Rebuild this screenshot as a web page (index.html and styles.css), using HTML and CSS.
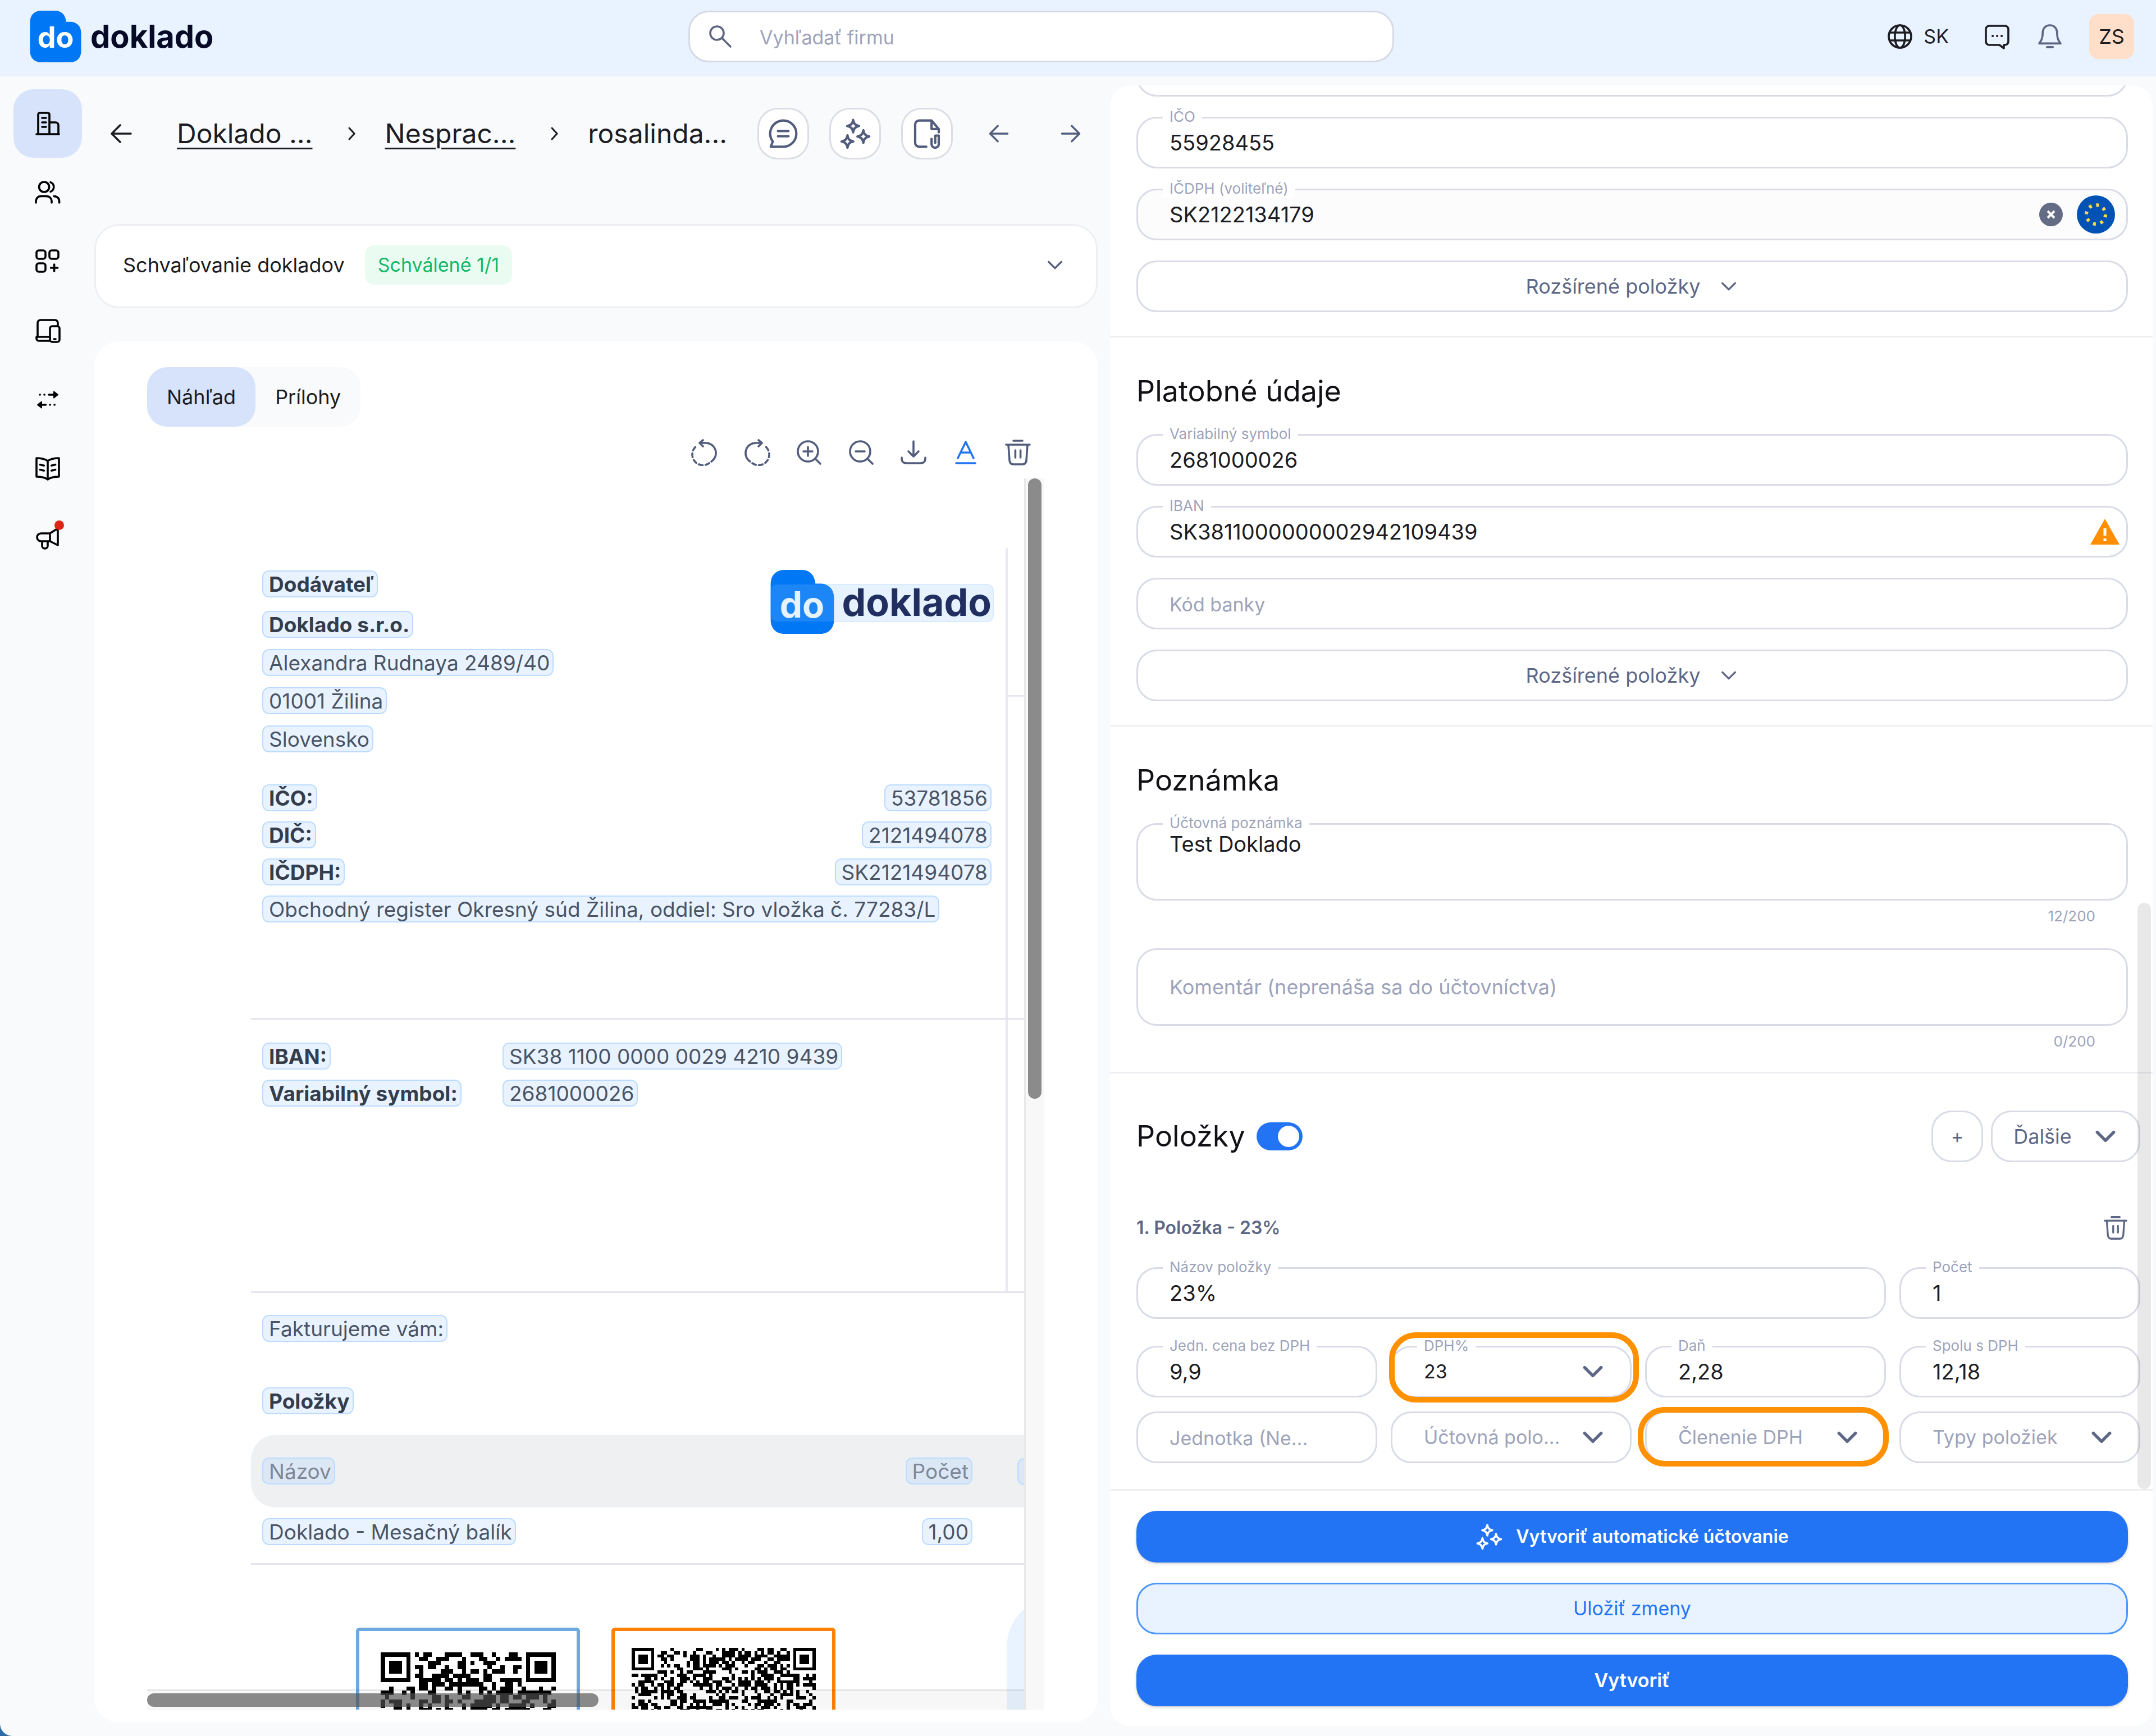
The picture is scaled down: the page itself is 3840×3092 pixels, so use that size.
FILE: index.html
```html
<!DOCTYPE html>
<html lang="sk">
<head>
<meta charset="UTF-8">
<meta name="viewport" content="width=device-width, initial-scale=1.0">
<title>Doklado</title>
<link rel="stylesheet" href="styles.css">
</head>
<body>

<!-- icons -->
<svg class="sprite" aria-hidden="true">
  <symbol id="logo" viewBox="0 0 92 93">
    <path d="M0 20C0 8 8 0 20 0H45C57 0 64 8 65 20H72C84 20 92 28 92 40V73C92 85 84 93 72 93H20C8 93 0 85 0 73Z" fill="#0078f5"/>
  </symbol>
  <symbol id="search" viewBox="0 0 24 24"><circle cx="9" cy="9" r="6"/><path d="M13.500 13.500l7.500 7.500"/></symbol>
  <symbol id="globe" viewBox="0 0 24 24"><circle cx="12" cy="12" r="10"/><ellipse cx="12" cy="12" rx="4.600" ry="10"/><path d="M3 8.500h18M3 15.500h18"/></symbol>
  <symbol id="chat" viewBox="0 0 24 24"><path d="M5 2.500h14a3 3 0 0 1 3 3v11a3 3 0 0 1-3 3h-1v3l-4-3H5a3 3 0 0 1-3-3v-11a3 3 0 0 1 3-3z"/><path d="M8 11.500h.1M12 11.500h.1M16 11.500h.1" stroke-width="2"/></symbol>
  <symbol id="bell" viewBox="0 0 24 24"><path d="M12 2c-4 0-6.400 3-6.400 7 0 5-1.500 7-3.100 9.200h19C19.900 16 18.400 14 18.400 9c0-4-2.400-7-6.400-7z"/><path d="M9.500 21.500h5" stroke-width="2"/></symbol>
  <symbol id="building" viewBox="0 0 24 24"><path d="M2 21.500h20M3.500 21.500V4a1.500 1.500 0 0 1 1.500-1.500h7A1.500 1.500 0 0 1 13.500 4v17.500M13.500 11H19a2.500 2.500 0 0 1 2.500 2.500v8M7 7h3.500M7 11h3.500M7 15h3.500"/></symbol>
  <symbol id="users" viewBox="0 0 24 24"><circle cx="8.800" cy="7" r="4.500"/><path d="M14.500 2.800a4.500 4.500 0 0 1 0 8.400M1.500 21v-1c0-3 2-4.800 4.500-4.800h4.500c3 0 5 1.800 5 4.800v1M17.500 15.200c3 .3 4.800 2 4.800 4.800v1"/></symbol>
  <symbol id="apps" viewBox="0 0 24 24"><rect x="2" y="2" width="8" height="7.500" rx="2"/><rect x="13.500" y="2" width="8" height="7.500" rx="2"/><rect x="2" y="13.500" width="8" height="7.500" rx="2"/><path d="M17.800 14.500v6M14.800 17.500h6"/></symbol>
  <symbol id="devices" viewBox="0 0 24 24"><path d="M3 17.500V5a2.500 2.500 0 0 1 2.500-2.500h13A2.500 2.500 0 0 1 21 5v2M13.500 17.500H2v1.500a2 2 0 0 0 2 2h10"/><rect x="14" y="8" width="8.500" height="14" rx="2"/><path d="M17.500 19.500h1.500"/></symbol>
  <symbol id="transfer" viewBox="0 0 24 24"><path d="M13 7.500h6M5.200 16.500h5M5 7.500h.1M9 7.500h.1M14 16.500h.1M18 16.500h.1"/><path d="M17.500 4.800v5.400l3.500-2.700zM6.500 13.800v5.400L3 16.500z" fill="currentColor" stroke-width="1"/></symbol>
  <symbol id="book" viewBox="0 0 24 24"><path d="M12 5c-2.500-1.800-6-2.500-10-2.500V19c4 0 7.500.7 10 2.500 2.500-1.800 6-2.500 10-2.500V2.500C18 2.500 14.500 3.200 12 5zM12 5v16.500M5.200 8.300l3.500.8M5.200 12.800l3.500.8M18.800 8.300l-3.500.8M18.800 12.800l-3.500.8"/></symbol>
  <symbol id="megaphone" viewBox="0 0 24 24"><path d="M6 8h8l7-4.500v15L14 15H6a3.500 3.500 0 0 1 0-7zM14 8v7M7 15v4a2.500 2.500 0 0 0 5 0v-4"/></symbol>
  <symbol id="left" viewBox="0 0 24 24"><path d="M20.500 12H4M11 4.500L3.500 12l7.500 7.500"/></symbol>
  <symbol id="right" viewBox="0 0 24 24"><path d="M3.500 12H20M13 4.500l7.500 7.500-7.500 7.500"/></symbol>
  <symbol id="next" viewBox="0 0 24 24"><path d="M9 6l5.500 6-5.500 6"/></symbol>
  <symbol id="down" viewBox="0 0 24 24"><path d="M4 8l8 8 8-8"/></symbol>
  <symbol id="note" viewBox="0 0 24 24"><path d="M12 2a10 10 0 1 1 0 20H2.500l1.500-4A10 10 0 0 1 12 2zM8 10h8M8 14h8"/></symbol>
  <symbol id="sparkles" viewBox="0 0 24 24"><path d="M10.500 1.500c.5 3 1.500 4 4.500 4.700-3 .7-4 1.800-4.500 4.800C10 8 9 6.900 6 6.200c3-.7 4-1.700 4.500-4.700zM18.300 9.500c.6 3 1.400 4 4.500 4.700-3.100.7-3.900 1.800-4.500 4.800-.6-3-1.500-4.100-4.500-4.800 3-.7 3.900-1.700 4.500-4.700zM6.200 13.300c.5 3 1.400 4 4.400 4.700-3 .7-3.900 1.700-4.400 4.700-.6-3-1.500-4-4.500-4.700 3-.7 3.900-1.700 4.500-4.700z"/></symbol>
  <symbol id="file" viewBox="0 0 24 24"><path d="M11.500 22H6a3 3 0 0 1-3-3V5a3 3 0 0 1 3-3h9.500L21 8.500V11M15.500 2v6.500H21M15.500 16v4a2.700 2.700 0 0 0 5.500 0v-6.500h-2.700V19"/></symbol>
  <symbol id="rotate-left" viewBox="0 0 24 24"><path d="M8 3.500h4.500A9 9 0 0 1 18 20"/><path d="M10.500 1L7.500 3.500l3 3"/><path d="M16 21.500a9.500 9.500 0 0 1-11-15.500" stroke-dasharray="3.500 2.600"/></symbol>
  <symbol id="rotate-right" viewBox="0 0 24 24"><path d="M16 3.500h-4.500A9 9 0 0 0 6 20"/><path d="M13.500 1l3 2.500-3 3"/><path d="M8 21.500a9.500 9.500 0 0 0 11-15.500" stroke-dasharray="3.500 2.600"/></symbol>
  <symbol id="zoom-in" viewBox="0 0 24 24"><circle cx="11" cy="11" r="9"/><path d="M18 18l4 4M7 11h8M11 7v8"/></symbol>
  <symbol id="zoom-out" viewBox="0 0 24 24"><circle cx="11" cy="11" r="9"/><path d="M18 18l4 4M7 11h8"/></symbol>
  <symbol id="download" viewBox="0 0 24 24"><path d="M12 2v13M7.500 11l4.500 4.500 4.500-4.500M1.500 16.500c0 3.500 1 5 4.500 5h12c3.500 0 4.500-1.500 4.500-5"/></symbol>
  <symbol id="underline" viewBox="0 0 24 24"><path d="M5 17L12 2.500 19 17M7.500 12h9M3.500 21.500h17"/></symbol>
  <symbol id="trash" viewBox="0 0 24 24"><path d="M1.500 5h21M8 1.500h8M3.500 5l1 14c.2 2 1.300 3.500 3.500 3.500h8c2.200 0 3.300-1.500 3.500-3.500l1-14M9.700 10v6.500M14.300 10v6.500"/></symbol>
</svg>

<header class="topbar">
  <a class="brand" href="#"><span class="brand-mark"><svg><use href="#logo"/></svg><span>do</span></span><span class="brand-name">doklado</span></a>
  <label class="search">
    <svg class="icon"><use href="#search"/></svg>
    <input type="search" placeholder="Vyhľadať firmu" aria-label="Vyhľadať firmu">
  </label>
  <div class="top-actions">
    <button class="lang"><svg class="icon"><use href="#globe"/></svg>SK</button>
    <button aria-label="Správy"><svg class="icon"><use href="#chat"/></svg></button>
    <button class="bell" aria-label="Upozornenia"><svg class="icon"><use href="#bell"/></svg></button>
    <button class="avatar">ZS</button>
  </div>
</header>

<div class="layout">
  <nav class="sidebar">
    <a class="active" href="#" aria-label="Firmy"><svg class="icon"><use href="#building"/></svg></a>
    <a href="#" aria-label="Používatelia"><svg class="icon"><use href="#users"/></svg></a>
    <a href="#" aria-label="Aplikácie"><svg class="icon"><use href="#apps"/></svg></a>
    <a href="#" aria-label="Zariadenia"><svg class="icon"><use href="#devices"/></svg></a>
    <a href="#" aria-label="Prevody"><svg class="icon"><use href="#transfer"/></svg></a>
    <a href="#" aria-label="Návody"><svg class="icon"><use href="#book"/></svg></a>
    <a class="news" href="#" aria-label="Novinky"><svg class="icon"><use href="#megaphone"/></svg></a>
  </nav>

  <main class="left-pane">
    <div class="crumbs">
      <a class="back" href="#" aria-label="Späť"><svg class="icon"><use href="#left"/></svg></a>
      <a class="crumb" href="#">Doklado ...</a>
      <svg class="icon sep"><use href="#next"/></svg>
      <a class="crumb" href="#">Nesprac...</a>
      <svg class="icon sep"><use href="#next"/></svg>
      <span class="crumb current">rosalinda...</span>
      <div class="crumb-actions">
        <button class="round" aria-label="Poznámky"><svg class="icon"><use href="#note"/></svg></button>
        <button class="round" aria-label="Vyťažiť"><svg class="icon"><use href="#sparkles"/></svg></button>
        <button class="round" aria-label="Súbor"><svg class="icon"><use href="#file"/></svg></button>
        <button class="plain" aria-label="Predchádzajúci"><svg class="icon"><use href="#left"/></svg></button>
        <button class="plain" aria-label="Nasledujúci"><svg class="icon"><use href="#right"/></svg></button>
      </div>
    </div>

    <section class="approval">
      <span class="approval-title">Schvaľovanie dokladov</span>
      <span class="badge">Schválené 1/1</span>
      <button aria-label="Rozbaliť"><svg class="icon"><use href="#down"/></svg></button>
    </section>

    <section class="preview">
      <div class="tabs">
        <button class="active">Náhľad</button>
        <button>Prílohy</button>
      </div>
      <div class="tools">
        <button aria-label="Otočiť doľava"><svg class="icon"><use href="#rotate-left"/></svg></button>
        <button aria-label="Otočiť doprava"><svg class="icon"><use href="#rotate-right"/></svg></button>
        <button aria-label="Priblížiť"><svg class="icon"><use href="#zoom-in"/></svg></button>
        <button aria-label="Oddialiť"><svg class="icon"><use href="#zoom-out"/></svg></button>
        <button aria-label="Stiahnuť"><svg class="icon"><use href="#download"/></svg></button>
        <button class="on" aria-label="Text"><svg class="icon"><use href="#underline"/></svg></button>
        <button aria-label="Zmazať"><svg class="icon"><use href="#trash"/></svg></button>
      </div>

      <div class="viewer">
        <div class="paper">
          <div class="block">
            <div class="supplier">
              <div class="supplier-head">
                <div class="address">
                  <p class="first"><b class="hl">Dodávateľ</b></p>
                  <p><b class="hl">Doklado s.r.o.</b></p>
                  <p><span class="hl">Alexandra Rudnaya 2489/40</span></p>
                  <p><span class="hl">01001 Žilina</span></p>
                  <p><span class="hl">Slovensko</span></p>
                </div>
                <div class="paper-logo"><span class="brand-mark"><svg><use href="#logo"/></svg><span>do</span></span><span class="brand-name">doklado</span></div>
              </div>
              <dl class="ids">
                <div><dt><b class="hl">IČO:</b></dt><dd><span class="hl">53781856</span></dd></div>
                <div><dt><b class="hl">DIČ:</b></dt><dd><span class="hl">2121494078</span></dd></div>
                <div><dt><b class="hl">IČDPH:</b></dt><dd><span class="hl">SK2121494078</span></dd></div>
              </dl>
              <p><span class="hl">Obchodný register Okresný súd Žilina, oddiel: Sro vložka č. 77283/L</span></p>
            </div>
            <div class="side"><div class="side-top"></div></div>
          </div>
          <div class="block">
            <dl class="bank">
              <div><dt><b class="hl">IBAN:</b></dt><dd><span class="hl">SK38 1100 0000 0029 4210 9439</span></dd></div>
              <div><dt><b class="hl">Variabilný symbol:</b></dt><dd><span class="hl">2681000026</span></dd></div>
            </dl>
            <div class="side"></div>
          </div>
          <p class="billed"><span class="hl">Fakturujeme vám:</span></p>
          <p class="lines-title"><b class="hl">Položky</b></p>
          <table class="lines">
            <thead>
              <tr><th><span class="hl">Názov</span></th><th class="num"><span class="hl">Počet</span></th><th class="cut"><span class="hl"></span></th></tr>
            </thead>
            <tbody>
              <tr><td><span class="hl">Doklado - Mesačný balík</span></td><td class="num"><span class="hl">1,00</span></td><td class="cut"></td></tr>
            </tbody>
          </table>
          <div class="codes">
            <div class="qr qr-blue"><svg viewBox="0 0 41 41" data-seed="7"></svg></div>
            <div class="qr qr-orange"><svg viewBox="0 0 57 57" data-seed="23"></svg></div>
            <div class="total"></div>
          </div>
        </div>
        <div class="track-y"><div class="thumb"></div></div>
        <div class="track-x"><div class="thumb"></div></div>
      </div>
    </section>
  </main>

  <aside class="right-pane">
    <form class="form">
      <div class="scroll">
        <section class="group group-first">
          <div class="field"><input type="text" aria-label="DIČ"></div>
          <div class="field"><label for="ico">IČO</label><input type="text" id="ico" value="55928455"></div>
          <div class="field tinted">
            <label for="icdph">IČDPH (voliteľné)</label><input type="text" id="icdph" value="SK2122134179">
            <button type="button" class="clear" aria-label="Vymazať"><svg viewBox="0 0 42 42"><circle cx="21" cy="21" r="21" fill="#636b85"/><path d="M15 15l12 12M27 15L15 27" stroke="#fff" stroke-width="4"/></svg></button>
            <svg class="eu" viewBox="0 0 68 68"><circle cx="34" cy="34" r="34" fill="#0052b4"/><circle cx="34" cy="34" r="17" fill="none" stroke="#ffda44" stroke-width="6" stroke-dasharray="5 8.350"/></svg>
          </div>
          <button type="button" class="more">Rozšírené položky <svg class="icon"><use href="#down"/></svg></button>
        </section>

        <section class="group">
          <h2>Platobné údaje</h2>
          <div class="field"><label for="vs">Variabilný symbol</label><input type="text" id="vs" value="2681000026"></div>
          <div class="field">
            <label for="iban">IBAN</label><input type="text" id="iban" value="SK3811000000002942109439">
            <svg class="warn" viewBox="0 0 52 46"><path d="M26 0L52 46H0Z" fill="#ff8f00"/><path d="M26 17v13M26 35v5" stroke="#fff" stroke-width="5"/></svg>
          </div>
          <div class="field"><input type="text" placeholder="Kód banky" aria-label="Kód banky"></div>
          <button type="button" class="more">Rozšírené položky <svg class="icon"><use href="#down"/></svg></button>
        </section>

        <section class="group notes">
          <h2>Poznámka</h2>
          <div class="field area"><label for="note-text">Účtovná poznámka</label><textarea id="note-text">Test Doklado</textarea></div>
          <div class="counter">12/200</div>
          <div class="field area empty"><textarea placeholder="Komentár (neprenáša sa do účtovníctva)" aria-label="Komentár"></textarea></div>
          <div class="counter">0/200</div>
        </section>

        <section class="group items">
          <div class="items-head">
            <h2>Položky</h2>
            <input class="switch" type="checkbox" role="switch" checked aria-label="Položky">
            <button type="button" class="add" aria-label="Pridať">+</button>
            <button type="button" class="other">Ďalšie <svg class="icon"><use href="#down"/></svg></button>
          </div>
          <div class="item-title">
            <h3>1. Položka - 23%</h3>
            <button type="button" aria-label="Zmazať položku"><svg class="icon"><use href="#trash"/></svg></button>
          </div>
          <div class="item-grid">
            <div class="field wide"><label for="name">Názov položky</label><input type="text" id="name" value="23%"></div>
            <div class="field"><label for="count">Počet</label><input type="text" id="count" value="1"></div>
          </div>
          <div class="item-grid second">
            <div class="field"><label for="price">Jedn. cena bez DPH</label><input type="text" id="price" value="9,9"></div>
            <div class="field pick marked"><label for="rate">DPH%</label><select id="rate"><option>23</option></select><svg class="icon"><use href="#down"/></svg></div>
            <div class="field"><label for="tax">Daň</label><input type="text" id="tax" value="2,28"></div>
            <div class="field"><label for="sum">Spolu s DPH</label><input type="text" id="sum" value="12,18"></div>
          </div>
          <div class="item-grid third">
            <div class="field"><input type="text" placeholder="Jednotka (Ne..." aria-label="Jednotka"></div>
            <div class="field pick unset"><select aria-label="Účtovná položka"><option>Účtovná polo...</option></select><svg class="icon"><use href="#down"/></svg></div>
            <div class="field pick unset marked marked-tight"><select aria-label="Členenie DPH"><option>Členenie DPH</option></select><svg class="icon"><use href="#down"/></svg></div>
            <div class="field pick unset"><select aria-label="Typy položiek"><option>Typy položiek</option></select><svg class="icon"><use href="#down"/></svg></div>
          </div>
        </section>
        <div class="form-thumb"></div>
      </div>

      <div class="form-actions">
        <button type="button" class="primary auto"><svg class="icon"><use href="#sparkles"/></svg>Vytvoriť automatické účtovanie</button>
        <button type="button" class="secondary">Uložiť zmeny</button>
        <button type="submit" class="primary">Vytvoriť</button>
      </div>
    </form>
  </aside>
</div>

<script>
  // draws the modules of a payment code, finder squares included
  function drawCode(svg) {
    var n = svg.viewBox.baseVal.width;
    var seed = parseInt(svg.dataset.seed);
    var d = '';
    function finder(x, y) {
      if (x > 7 && x < n - 8) return -1;
      if (y > 7 && y < n - 8) return -1;
      if (x > 7 && y > 7) return -1;
      var fx = x > 7 ? x - (n - 7) : x;
      var fy = y > 7 ? y - (n - 7) : y;
      if (fx < 0 || fy < 0 || fx > 6 || fy > 6) return 0;
      var r = Math.max(Math.abs(fx - 3), Math.abs(fy - 3));
      return r === 2 ? 0 : 1;
    }
    for (var y = 0; y < n; y++) {
      for (var x = 0; x < n; x++) {
        seed = (seed * 16807) % 2147483647;
        var on = finder(x, y);
        if (on < 0) on = (seed >> 8) % 100 < 50 ? 1 : 0;
        if (on) d += 'M' + x + ' ' + y + 'h1v1h-1z';
      }
    }
    var path = document.createElementNS('http://www.w3.org/2000/svg', 'path');
    path.setAttribute('d', d);
    svg.appendChild(path);
  }
  document.querySelectorAll('.qr svg').forEach(drawCode);
</script>

</body>
</html>
```
FILE: styles.css
```css
* {
  box-sizing: border-box;
}
html {
  background-color: #2d6ca6;
}
body {
  font-family: Inter, "Open Sans", sans-serif;
  font-size: 34px;
  line-height: 48px;
  color: #1c1c22;
  background-color: #f8fafc;
  margin: 0;
  height: 100vh;
  display: flex;
  flex-direction: column;
  overflow: hidden;
  border-bottom-left-radius: 22px;
}
h2, h3, p, dl, dd {
  margin: 0;
}
button, input, select, textarea {
  font: inherit;
  color: inherit;
  background: none;
  border: none;
  padding: 0;
  margin: 0;
  outline: none;
}
button {
  display: flex;
  align-items: center;
  justify-content: center;
  cursor: pointer;
}
a {
  color: inherit;
}
.sprite {
  position: absolute;
  width: 0;
  height: 0;
}
.icon {
  width: 48px;
  height: 48px;
  flex: none;
  fill: none;
  stroke: currentColor;
  stroke-width: 1.8;
  stroke-linecap: round;
  stroke-linejoin: round;
}

/* top bar */
.topbar {
  height: 136px;
  flex: none;
  display: grid;
  grid-template-columns: 1226fr 1257fr 1357fr;
  align-items: center;
  background-color: #e9f3ff;
  padding-bottom: 6px;
}
.brand {
  display: flex;
  align-items: center;
  gap: 16px;
  margin-left: 53px;
  text-decoration: none;
}
.brand-mark {
  position: relative;
  width: 92px;
  height: 92px;
  color: #ffffff;
  font-size: 52px;
  font-weight: 700;
}
.brand-mark svg {
  display: block;
  width: 100%;
  height: 100%;
}
.brand-mark span {
  position: absolute;
  left: 0;
  right: 0;
  bottom: 20px;
  text-align: center;
}
.brand-name {
  font-size: 56px;
  font-weight: 700;
  line-height: 64px;
  color: #060a26;
}
.search {
  display: flex;
  align-items: center;
  height: 92px;
  background-color: #ffffff;
  border: 3px solid #d6dae6;
  border-radius: 36px;
  padding: 0 30px;
  color: #5d6580;
}
.search input {
  flex: 1;
  margin-left: 46px;
  padding-top: 4px;
}
::placeholder {
  color: #9da3ba;
  opacity: 1;
}
.top-actions {
  display: flex;
  align-items: center;
  justify-content: flex-end;
  gap: 46px;
  padding-right: 39px;
}
.lang {
  gap: 18px;
  margin-right: 16px;
}
.bell {
  color: #5d6580;
}
.avatar {
  width: 80px;
  height: 80px;
  border-radius: 16px;
  background-color: #ffdfca;
  font-size: 36px;
}

/* page columns */
.layout {
  flex: 1;
  min-height: 0;
  display: grid;
  grid-template-columns: 168px 1787fr 1885fr;
}
.sidebar {
  display: flex;
  flex-direction: column;
  gap: 1px;
  padding: 23px 0 0 24px;
  color: #000000;
}
.sidebar a {
  display: flex;
  align-items: center;
  justify-content: center;
  position: relative;
  width: 122px;
  height: 122px;
  border-radius: 36px;
}
.sidebar .active {
  background-color: #d6e3fb;
}
.news::after {
  content: "";
  position: absolute;
  top: 30px;
  right: 32px;
  width: 17px;
  height: 17px;
  border-radius: 50%;
  background-color: #dd2415;
}
.left-pane {
  display: flex;
  flex-direction: column;
  min-width: 0;
  min-height: 0;
  padding: 56px 0 24px;
}
.crumbs {
  display: flex;
  align-items: center;
  height: 92px;
  flex: none;
  margin: 0 2px 115px 24px;
  font-size: 48px;
  white-space: nowrap;
}
.back {
  display: flex;
}
.crumb {
  margin-left: 75px;
  text-underline-offset: 8px;
  text-decoration-thickness: 3px;
}
.sep {
  width: 40px;
  margin-left: 50px;
  margin-right: -22px;
}
.sep + .crumb {
  margin-left: 61px;
}
.crumb-actions {
  display: flex;
  gap: 36px;
  margin-left: auto;
  color: #525c7c;
}
.crumb-actions button {
  width: 92px;
  height: 92px;
}
.round {
  background-color: #ffffff;
  border: 3px solid #dcdee6;
  border-radius: 36px;
}
.round .icon {
  width: 56px;
  height: 56px;
}
.plain .icon {
  width: 44px;
}
.approval {
  display: flex;
  align-items: center;
  height: 150px;
  flex: none;
  border: 3px solid #eeeff3;
  border-radius: 44px;
  background-color: #ffffff;
  padding: 0 56px 4px 48px;
  margin-bottom: 59px;
}
.approval-title, .tabs button, .more, .other {
  font-size: 36px;
}
.badge {
  margin-left: 36px;
  padding: 11px 23px;
  border-radius: 16px;
  background-color: #eafcf2;
  color: #14b866;
}
.approval button {
  margin-left: auto;
  color: #525c7c;
}
.approval .icon, .more .icon {
  width: 34px;
  height: 34px;
  stroke-width: 2.4;
}
.preview {
  flex: 1;
  min-height: 0;
  display: flex;
  flex-direction: column;
  background-color: #ffffff;
  border-radius: 44px;
  padding: 46px 95px 23px 94px;
}
.tabs {
  display: flex;
  align-self: flex-start;
  border-radius: 36px;
  background-color: #f8fafc;
}
.tabs button {
  height: 106px;
  padding: 0 35px;
  border-radius: 36px;
}
.tabs .active {
  background-color: #d6e3fb;
}
.tools {
  display: flex;
  justify-content: flex-end;
  gap: 45px;
  margin: 22px 23px 22px 0;
  color: #525c7c;
}
.tools .on {
  color: #2374f5;
}

/* scanned document */
.viewer {
  position: relative;
  flex: 1;
  min-height: 0;
  overflow: hidden;
  font-size: 37px;
  color: #4a5464;
}
.paper {
  margin: 0 35px 0 185px;
  padding-top: 124px;
}
.paper p, .ids > div, .bank > div {
  height: 66px;
  display: flex;
  align-items: center;
}
.hl {
  display: inline-block;
  height: 48px;
  line-height: 46px;
  padding: 0 5px 0 10px;
  border: 2px solid #bcdcff;
  border-radius: 12px;
  background-color: #e9f3ff;
  white-space: nowrap;
}
b.hl {
  color: #343d4c;
}
.block {
  display: flex;
  border-bottom: 3px solid #e4e4ee;
}
.supplier {
  flex: 1;
  padding: 30px 25px 161px 20px;
}
.side {
  width: 34px;
  border-left: 4px solid #e9e8f5;
}
.side-top {
  height: 265px;
  border-bottom: 3px solid #e9e8f5;
}
.supplier-head {
  display: flex;
  justify-content: space-between;
  margin-bottom: 38px;
}
.address p {
  height: 68px;
}
.address .first {
  margin-bottom: 4px;
}
.paper-logo {
  display: flex;
  align-items: center;
  align-self: flex-start;
  gap: 14px;
  margin-top: 9px;
  position: relative;
}
.paper-logo::after {
  content: "";
  position: absolute;
  left: 0;
  right: -4px;
  top: 25px;
  height: 64px;
  border: 2px solid #4da0ff;
  border-radius: 12px;
  background-color: #8cc0ff;
  opacity: 0.2;
}
.paper-logo .brand-mark {
  width: 114px;
  height: 114px;
  font-size: 64px;
}
.paper-logo .brand-mark span {
  bottom: 28px;
}
.paper-logo .brand-name {
  font-size: 68px;
  color: #060a38;
}
.ids > div {
  justify-content: space-between;
}
.bank {
  flex: 1;
  padding: 32px 0 320px 20px;
}
.bank dt {
  width: 428px;
}
.billed {
  margin: 30px 0 63px 20px;
}
.lines-title {
  margin: 0 0 28px 20px;
}
.lines {
  width: 100%;
  border-collapse: collapse;
}
.lines th {
  height: 129px;
  padding: 0;
  background-color: #eff0f2;
  text-align: left;
  font-weight: 400;
  color: #7e8795;
}
.lines th .hl {
  background-color: #dce7f6;
}
.lines th:first-child {
  border-radius: 44px 0 0 44px;
}
.lines td {
  height: 100px;
  padding: 0 0 12px;
  border-bottom: 3px solid #e4e4ee;
}
.lines th:first-child, .lines td:first-child {
  padding-left: 20px;
}
.lines .num {
  text-align: right;
  padding-right: 80px;
}
.lines .cut {
  width: 13px;
}
.cut .hl {
  display: block;
  width: 13px;
  padding: 0;
  border-right: none;
  border-radius: 12px 0 0 12px;
}
.codes {
  display: flex;
  gap: 56px;
  padding: 57px 0 0 187px;
}
.qr {
  width: 399px;
  height: 399px;
  flex: none;
  margin-top: 55px;
  border: 6px solid #6ea8de;
  border-radius: 6px;
}
.qr svg {
  display: block;
  width: 312px;
  margin: 38px auto;
  shape-rendering: crispEdges;
}
.qr-orange {
  border-color: #ff8208;
}
.qr-orange svg {
  width: 328px;
  margin: 30px auto;
}
.total {
  width: 300px;
  flex: none;
  margin: 0 -268px 0 auto;
  border-radius: 90px 0 0 0;
  background-color: #e9f3ff;
}
.track-y {
  position: absolute;
  top: 0;
  right: 0;
  bottom: 0;
  width: 36px;
  border-left: 3px solid #e8e8e8;
  background-color: #f8f8f8;
}
.track-y .thumb {
  width: 24px;
  height: 1105px;
  margin-left: 4px;
  border-radius: 12px;
  background-color: #8b8b8b;
}
.track-x {
  position: absolute;
  left: 0;
  right: 36px;
  bottom: 0;
  height: 36px;
  border-top: 3px solid rgba(0, 0, 0, 0.07);
  background-color: rgba(0, 0, 0, 0.03);
}
.track-x .thumb {
  width: 804px;
  height: 24px;
  margin-top: 4px;
  border-radius: 12px;
  background-color: rgba(80, 80, 80, 0.66);
}

/* form */
.right-pane {
  min-width: 0;
  min-height: 0;
  padding: 16px 6px 17px 22px;
}
.form {
  height: 100%;
  display: flex;
  flex-direction: column;
  overflow: hidden;
  border-radius: 36px;
  background-color: #ffffff;
}
.scroll {
  flex: 1;
  min-height: 0;
  position: relative;
  overflow: hidden;
}
.form-thumb {
  position: absolute;
  right: 3px;
  bottom: 0;
  width: 24px;
  height: 1044px;
  border-radius: 12px;
  background-color: rgba(0, 0, 0, 0.09);
}
.group {
  display: flex;
  flex-direction: column;
  gap: 36px;
  padding: 66px 44px 42px 47px;
  border-bottom: 3px solid #eeeff2;
}
.group-first {
  padding-top: 0;
  margin-top: -72px;
}
.group h2 {
  font-size: 52px;
  font-weight: 400;
  line-height: 60px;
  margin-bottom: 10px;
  color: #111116;
}
.field {
  position: relative;
  display: flex;
  height: 92px;
  border: 3px solid #d9dbe6;
  border-radius: 36px;
  background-color: #ffffff;
}
.field label {
  position: absolute;
  top: -19px;
  left: 44px;
  padding: 0 12px;
  font-size: 26px;
  line-height: 32px;
  color: #9da3ba;
  background-color: #ffffff;
}
.field input, .field textarea, .field select {
  flex: 1;
  min-width: 0;
  padding: 0 56px;
  font-size: 38px;
}
.field ::placeholder {
  font-size: 34px;
}
.tinted {
  background-color: #fcfcfd;
}
.clear {
  position: absolute;
  right: 113px;
  top: 22px;
}
.clear svg {
  width: 42px;
  height: 42px;
}
.eu {
  position: absolute;
  right: 20px;
  top: 9px;
  width: 68px;
  height: 68px;
}
.warn {
  position: absolute;
  right: 12px;
  top: 20px;
  width: 52px;
  height: 46px;
}
.more {
  height: 92px;
  gap: 34px;
  border: 3px solid #d9dbe6;
  border-radius: 36px;
  color: #5d6785;
}
.notes {
  gap: 0;
}
.notes h2 {
  margin-bottom: 46px;
}
.area {
  height: 138px;
}
.field textarea {
  resize: none;
  padding-top: 10px;
}
.empty textarea {
  padding-top: 42px;
}
.empty ::placeholder {
  font-size: 36px;
}
.counter {
  font-size: 26px;
  line-height: 32px;
  margin: 12px 58px 0 0;
  text-align: right;
  color: #9da3ba;
}
.counter + .field {
  margin-top: 41px;
}
.notes {
  padding-bottom: 38px;
}
.items {
  display: block;
  padding-right: 22px;
  border-bottom: none;
}
.items-head {
  display: flex;
  align-items: center;
  height: 92px;
  margin-bottom: 93px;
}
.items-head h2 {
  margin: 0 20px 0 0;
}
.switch {
  appearance: none;
  width: 82px;
  height: 50px;
  border-radius: 25px;
  background-color: #2374f5;
}
.switch::before {
  content: "";
  display: block;
  width: 38px;
  height: 38px;
  margin: 6px 6px 6px 38px;
  border-radius: 50%;
  background-color: #ffffff;
}
.add, .other {
  height: 92px;
  border: 3px solid #d9dbe6;
  border-radius: 36px;
  color: #5d6785;
}
.add {
  width: 92px;
  margin-left: auto;
  margin-right: 14px;
}
.other {
  width: 266px;
  gap: 38px;
}
.other .icon, .pick .icon {
  width: 44px;
  height: 44px;
  stroke-width: 3;
}
.item-title {
  display: flex;
  justify-content: space-between;
  align-items: center;
  margin-bottom: 46px;
  padding-right: 22px;
  color: #5d6785;
}
.item-title h3 {
  font-size: 32px;
  font-weight: 600;
}
.item-title .icon {
  width: 44px;
}
.item-grid {
  display: grid;
  grid-template-columns: repeat(4, minmax(0, 1fr));
  gap: 24px;
}
.wide {
  grid-column: span 3;
}
.second {
  margin-top: 48px;
}
.third {
  margin-top: 25px;
}
.field.pick select {
  appearance: none;
  font-size: 34px;
}
.unset select {
  color: #9da3ba;
}
.pick .icon {
  position: absolute;
  right: 44px;
  top: 21px;
  color: #5d6785;
  pointer-events: none;
}
.marked::after {
  content: "";
  position: absolute;
  inset: -27px -16px -12px -6px;
  border: 10px solid #ff9100;
  border-radius: 48px;
  pointer-events: none;
}
.marked-tight::after {
  inset: -11px -8px -9px -16px;
}
.form-actions {
  display: flex;
  flex-direction: column;
  gap: 36px;
  padding: 36px 44px 36px 47px;
  border-top: 3px solid #eeeff2;
}
.form-actions button {
  height: 92px;
  border-radius: 36px;
  gap: 24px;
}
.primary {
  background-color: #2374f5;
  color: #ffffff;
  font-weight: 600;
  box-shadow: 0 2px 4px rgba(0, 0, 0, 0.2);
}
.auto {
  font-size: 32px;
}
.secondary {
  border: 3px solid #4d97fb;
  background-color: #e9f3ff;
  color: #2374f5;
}
```
